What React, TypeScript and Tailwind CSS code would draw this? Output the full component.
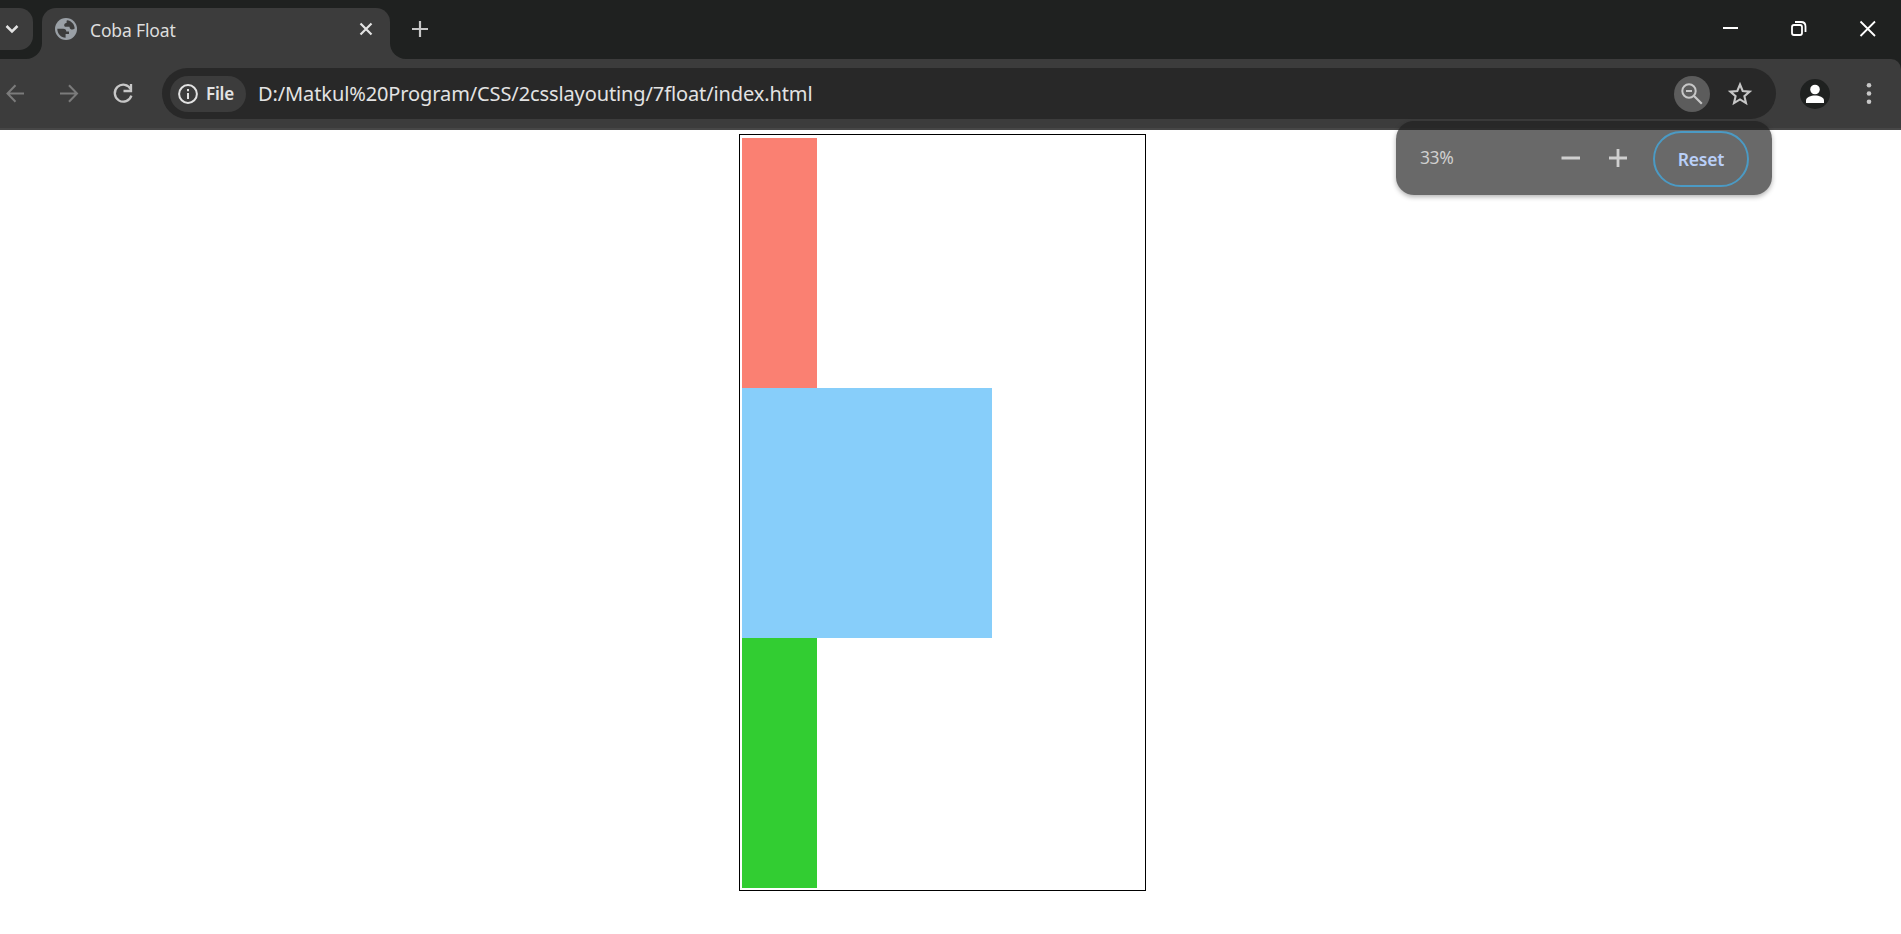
import React from "react";

function TabStrip() {
  return (
    <div className="flex h-[59px] bg-[#1f2120]">
      <div className="w-[42px] shrink-0 bg-[#3c3c3c]">
        <div className="h-full rounded-br-[16px] bg-[#1f2120] pt-2">
          <button aria-label="Search tabs" className="block h-[42px] w-[33px] rounded-r-[14px] bg-[#3c3c3c]">
            <svg width="33" height="42" fill="none" stroke="#e3e3e3" strokeWidth="2.5">
              <path d="M6.5 18l5.5 5.5 5.5-5.5" />
            </svg>
          </button>
        </div>
      </div>
      <div className="mt-2 flex w-[348px] shrink-0 rounded-t-[14px] bg-[#3c3c3c] pt-[10px] pl-[13px]">
        <svg width="22" height="22" viewBox="0 0 22 22" className="shrink-0">
          <circle cx="11" cy="11" r="11" fill="#9aa0a6" />
          <path
            d="M12 2.300c4.300.4 7.500 4 7.700 8.200-.9.900-2.100 1.200-3.300.9-1.300-.3-1.800-1.300-1.900-2.600h-3.300c-1.700 0-2.300-1.200-1.900-2.400.4-1 1.200-1.500 2.300-1.500 0-1.100-.1-1.900.4-2.600zM2.300 10.800h5.900c2 0 3.100.9 3.100 2.800H14V16h-3.400v3.700c-4.700 0-8.300-4-8.300-8.900z"
            fill="#3c3c3c"
          />
        </svg>
        <span className="ml-[13px] w-[240px] font-['Noto_Sans','Open_Sans',sans-serif] text-[17.5px] leading-[25px] tracking-[-0.15px] text-[#dedede]">
          Coba Float
        </span>
        <svg aria-label="Close tab" width="44" height="24" className="shrink-0" fill="none" stroke="#e3e3e3" strokeWidth="2.2">
          <path d="M30.500 5.500l11 11M41.500 5.500l-11 11" />
        </svg>
      </div>
      <div className="flex flex-1 bg-[#3c3c3c]">
        <div className="flex flex-1 justify-between rounded-bl-[16px] bg-[#1f2120]">
          <svg aria-label="New tab" width="60" height="59" fill="none" stroke="#c7c7c7" strokeWidth="2.200">
            <path d="M22 29h16M30 21v16" />
          </svg>
          <svg aria-label="Window controls" width="200" height="59" fill="none" stroke="#fff" strokeWidth="1.800">
            <path d="M22 28h15" strokeWidth="2" />
            <rect x="91" y="25" width="10" height="10" rx="2" />
            <path d="M94 22h6q4.500 0 4.500 4.500v5.500" />
            <path d="M159.500 21.500l14.500 14.500M174 21.500l-14.500 14.500" />
          </svg>
        </div>
      </div>
    </div>
  );
}

function Toolbar() {
  return (
    <div className="bg-[#1f2120]">
      <div className="flex h-[71px] items-start rounded-tr-[10px] border-b-2 border-[#474747] bg-[#3c3c3c] pt-[9px]">
        <svg aria-label="Navigation" width="162" height="51" className="shrink-0" fill="none" strokeWidth="2">
          <g stroke="#7b7b7b">
            <path d="M24 25.500H8M15.500 17.200L7.500 25.500l8 8.300" />
            <path d="M60 25.500h16.500M69 17.200l8 8.300-8 8.300" />
          </g>
          <path d="M130.800 21.200a8.500 8.500 0 1 0 .6 6.500" stroke="#c7c7c7" strokeWidth="2.300" />
          <path d="M131 16v7h-7.500" stroke="#c7c7c7" strokeWidth="2.300" />
        </svg>
        <div className="flex h-[51px] w-[1614px] shrink-0 items-center rounded-full bg-[#282828] pl-2">
          <div className="flex h-9 w-[76px] items-center rounded-full bg-[#3c3c3c] pl-[8px]">
            <svg width="20" height="20" fill="none" stroke="#e3e3e3" strokeWidth="2">
              <circle cx="10" cy="10" r="8.900" />
              <path d="M10 9v6M10 5v2.200" />
            </svg>
            <span className="ml-2 font-['Noto_Sans','Open_Sans',sans-serif] text-[17px] leading-9 font-semibold tracking-[-0.2px] text-[#e3e3e3]">
              File
            </span>
          </div>
          <span className="ml-3 flex-1 font-['Noto_Sans','Open_Sans',sans-serif] text-[20px] leading-9 tracking-[-0.11px] whitespace-nowrap text-[#e3e3e3]">
            D:/Matkul%20Program/CSS/2csslayouting/7float/index.html
          </span>
          <div className="mr-[17px] size-9 rounded-full bg-[#5c5c5c]">
            <svg width="36" height="36" fill="none" stroke="#c7c7c7" strokeWidth="2">
              <circle cx="15" cy="15" r="6.700" />
              <path d="M12 15h6M19.800 19.800l8 8" strokeWidth="2.200" />
            </svg>
          </div>
          <svg width="26" height="26" className="mr-[23px]" fill="none" stroke="#c7c7c7" strokeWidth="2.100">
            <path d="M13 3.500l2.700 6.500 7 .6-5.300 4.600 1.600 6.900-6-3.700-6 3.700 1.600-6.900-5.300-4.600 7-.6z" />
          </svg>
        </div>
        <svg aria-label="Profile and menu" width="125" height="52" className="shrink-0">
          <circle cx="39" cy="26" r="15" fill="#1f2120" />
          <circle cx="39" cy="21.500" r="4.800" fill="#fff" />
          <path d="M30 35v-2.500c0-3.500 5-5 9-5s9 1.500 9 5V35z" fill="#fff" />
          <g fill="#c7c7c7">
            <circle cx="93" cy="17.200" r="2.300" />
            <circle cx="93" cy="25.500" r="2.300" />
            <circle cx="93" cy="33.800" r="2.300" />
          </g>
        </svg>
      </div>
    </div>
  );
}

function ZoomBubble() {
  return (
    <div className="absolute top-[121px] left-[1396px] flex h-[74px] w-[376px] items-center rounded-[18px] bg-[#1e1e1eaa] pl-6 font-['Noto_Sans','Open_Sans',sans-serif] shadow-[0_2px_5px_rgba(0,0,0,0.3)]">
      <span className="w-[133px] pb-[2px] text-[17.5px] tracking-[-0.4px] text-[#cfcfcf]">33%</span>
      <svg width="100" height="30" className="shrink-0" fill="none" stroke="#cfcfcf" strokeWidth="2.800">
        <path d="M8.500 15h18.500M56 15h18M65 6v18" />
      </svg>
      <button className="mt-[2px] h-[56px] w-[96px] rounded-full border-2 border-[#4b9ac4] text-[17.5px] font-semibold tracking-[-0.2px] text-[#b9cff8]">
        Reset
      </button>
    </div>
  );
}

export default function App() {
  return (
    <div className="relative h-[934px] w-[1901px] overflow-hidden bg-white">
      <TabStrip />
      <Toolbar />
      <main className="pt-1 pl-[739px]">
        <div className="h-[757px] w-[407px] border border-black pt-[3px] pl-[2px]">
          <div className="h-[250px] w-[75px] bg-[salmon]" />
          <div className="size-[250px] bg-[lightskyblue]" />
          <div className="h-[250px] w-[75px] bg-[limegreen]" />
        </div>
      </main>
      <ZoomBubble />
    </div>
  );
}
